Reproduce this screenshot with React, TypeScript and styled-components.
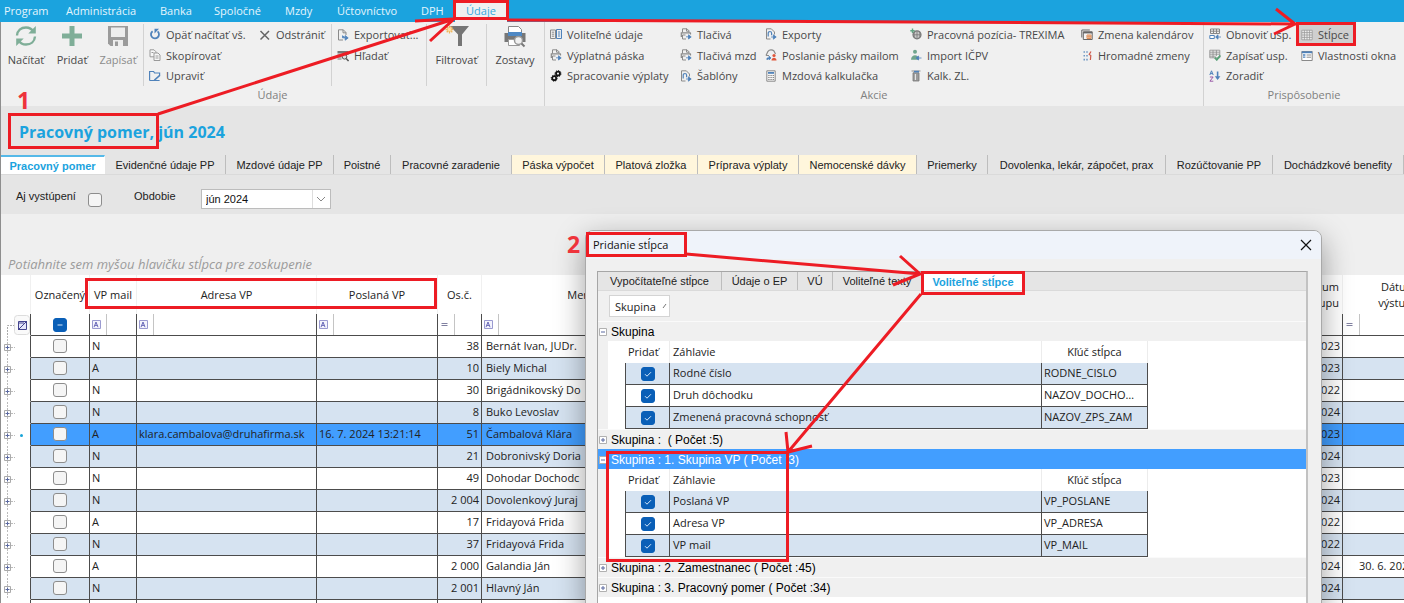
import React from "react";
import styled, { createGlobalStyle, css } from "styled-components";

const ui = `"Open Sans", "Noto Sans", sans-serif`;
const arial = `"Liberation Sans", Arial, sans-serif`;
const blue = "#1ba3de";
const line = "#4c4c4c";
const stripe = "#d6e3f1";
const selected = "#429eff";

const Global = createGlobalStyle`
  *, *::before, *::after { box-sizing: border-box; }
  body { margin: 0; background: #efefef; font-family: ${ui}; font-size: 11px; color: #222; }
  button { border: 0; padding: 0; margin: 0; background: none; font: inherit; color: inherit; white-space: nowrap; }
`;

/* ---------- shell ---------- */
const Shell = styled.div`
  position: relative;
  height: 100vh;
  overflow: hidden;
  display: flex;
  flex-direction: column;
`;
const MenuBar = styled.nav`
  display: flex;
  flex: none;
  height: 22px;
  padding-left: 4px;
  background: ${blue};
`;
const MenuItem = styled.button<{ $w: number; $active?: boolean }>`
  width: ${(p) => p.$w}px;
  height: 22px;
  text-align: ${(p) => (p.$active ? "center" : "left")};
  color: ${(p) => (p.$active ? "#35a9de" : "#e4f5fd")};
  background: ${(p) => (p.$active ? "#f0f0f0" : "transparent")};
  line-height: 20px;
`;
const Body = styled.div`
  flex: 1;
  display: flex;
  flex-direction: column;
  border-left: 1px solid #8e8e8e;
  min-height: 0;
`;

/* ---------- ribbon ---------- */
const Ribbon = styled.div`
  display: flex;
  flex: none;
  height: 84px;
  background: #f0f0f0;
  color: #484848;
`;
const Group = styled.section<{ $w?: number }>`
  flex: ${(p) => (p.$w ? `0 0 ${p.$w}px` : "1 1 0")};
  min-width: 0;
  display: flex;
  flex-direction: column;
  & + & { border-left: 1px solid #d2d2d2; }
`;
const GroupContent = styled.div`
  display: flex;
  height: 64px;
  padding-top: 2px;
`;
const GroupLabel = styled.div`
  text-align: center;
  line-height: 18px;
  color: #808080;
`;
const Section = styled.div<{ $w: number; $split?: boolean }>`
  flex: 0 0 ${(p) => p.$w}px;
  min-width: 0;
  display: flex;
  border-right: 1px solid ${(p) => (p.$split ? "#d2d2d2" : "transparent")};
`;
const BigButton = styled.button<{ $w: number; $dim?: boolean }>`
  width: ${(p) => p.$w}px;
  display: flex;
  flex-direction: column;
  align-items: center;
  gap: 4px;
  color: ${(p) => (p.$dim ? "#8c8c8c" : "#484848")};
  svg { width: 24px; height: 24px; }
`;
const Column = styled.div<{ $w: number }>`
  flex: 0 0 ${(p) => p.$w}px;
  min-width: 0;
  display: flex;
  flex-direction: column;
  align-items: flex-start;
`;
const SmallButton = styled.button<{ $on?: boolean }>`
  display: flex;
  align-items: center;
  gap: 5px;
  height: 21px;
  min-width: 57px;
  padding: 0 5px;
  background: ${(p) => (p.$on ? "#cfcfcf" : "transparent")};
  svg { width: 12px; height: 12px; flex: none; }
`;

/* ---------- heading, tabs, filter ---------- */
const Heading = styled.h1`
  flex: none;
  margin: 0;
  height: 49px;
  padding: 4px 0 0 18px;
  font-size: 16px;
  line-height: 44px;
  font-weight: 700;
  color: ${blue};
  background: #e5e5e5;
`;
const TabStrip = styled.div`
  display: flex;
  flex: none;
  height: 20px;
  background: #e5e5e5;
  border-bottom: 1px solid #dadada;
  font-family: ${arial};
  font-size: 11px;
`;
const Tab = styled.button<{ $w: number; $tone?: "active" | "cream" }>`
  flex: 0 0 ${(p) => p.$w}px;
  line-height: 18px;
  color: #222;
  border-right: 1px solid #bdbdbd;
  ${(p) => p.$tone === "cream" && css`background: #fff6dc;`}
  ${(p) =>
    p.$tone === "active" &&
    css`
      background: #fff;
      color: ${blue};
      font-weight: 700;
      line-height: 16px;
      border-top: 2px solid #55b9e8;
      border-right-color: transparent;
    `}
`;
const FilterBar = styled.div`
  display: flex;
  flex: none;
  align-items: flex-start;
  height: 39px;
  padding: 14px 0 0 15px;
  background: #e5e5e5;
  font-family: ${arial};
  font-size: 11px;
  color: #222;
  label { line-height: 15px; }
`;
const FilterLabel = styled.label<{ $w: number }>`
  width: ${(p) => p.$w}px;
`;
const Tick = styled.input.attrs({ type: "checkbox" })<{ $solid?: boolean }>`
  appearance: none;
  display: block;
  width: 14px;
  height: 14px;
  margin: 0;
  border: 1px solid #8d8d8d;
  border-radius: 3px;
  background: #f5f5f5;
  ${(p) =>
    p.$solid &&
    css`
      border-color: #0a5fb7;
      background-color: #0a5fb7;
    `}
`;
const TickWrap = styled.span`
  position: relative;
  display: block;
  width: 14px;
  margin: 0 auto;
  svg { position: absolute; inset: 0; width: 14px; height: 14px; pointer-events: none; }
`;
const FilterTick = styled.div`
  padding-top: 4px;
  width: 46px;
`;
const SelectBox = styled.div`
  display: flex;
  position: relative;
  width: 130px;
  height: 20px;
  svg { position: absolute; right: 5px; top: 6px; width: 10px; height: 8px; pointer-events: none; }
  &::after { content: ""; position: absolute; right: 18px; top: 1px; bottom: 1px; width: 1px; background: #ddd; }
`;
const Select = styled.select`
  appearance: none;
  width: 100%;
  border: 1px solid #bcbcbc;
  border-radius: 0;
  background: #fff;
  padding: 0 4px;
  font: 11px ${arial};
  color: #111;
`;
const Hint = styled.div`
  flex: none;
  height: 61px;
  padding: 40px 0 0 7px;
  font-style: italic;
  font-size: 13px;
  line-height: 20px;
  color: #9b9b9b;
`;

/* ---------- main grid ---------- */
const GridArea = styled.div`
  flex: 1;
  min-height: 0;
  overflow: hidden;
  background: #fff;
`;
const Grid = styled.table`
  width: calc(100% + 51px);
  table-layout: fixed;
  border-collapse: separate;
  border-spacing: 0;
  line-height: 16px;
  th { height: 39px; padding: 0; font-weight: 400; vertical-align: middle; border-right: 1px solid #f0f0f0; }
  td {
    height: 22px;
    padding: 0 2px;
    overflow: hidden;
    white-space: nowrap;
    border-bottom: 1px solid ${line};
    border-right: 1px solid ${line};
    vertical-align: middle;
  }
  td:first-child { border-bottom-color: transparent; background: #fff; padding: 0; }
`;
const Row = styled.tr<{ $bg: string }>`
  td { background: ${(p) => p.$bg}; padding-bottom: 2px; }
  td:first-child { padding-bottom: 0; }
`;
const Num = styled.td`
  text-align: right;
`;
const Name = styled.td`
  && { padding-left: 4px; }
`;
const EndDate = styled.td`
  && { padding-left: 16px; }
`;
const StartHead = styled.th`
  && { padding-right: 3px; text-align: right; }
`;
const FilterCell = styled.div`
  display: flex;
  align-items: center;
  width: 15px;
  height: 21px;
  border-right: 1px solid #c4c4c4;
  svg { width: 9px; height: 9px; }
`;
const Gutter = styled.div`
  height: 21px;
  svg { display: block; width: 29px; height: 21px; }
`;

/* ---------- dialog ---------- */
const Dialog = styled.section`
  position: absolute;
  top: 230px;
  right: 82px;
  bottom: -8px;
  left: 585px;
  display: flex;
  flex-direction: column;
  background: #f0f0f0;
  border: 1px solid #a9a9a9;
  border-radius: 8px;
  box-shadow: 0 10px 30px rgba(0, 0, 0, 0.38);
  overflow: hidden;
`;
const DialogBar = styled.header`
  flex: none;
  display: flex;
  justify-content: space-between;
  align-items: center;
  height: 28px;
  padding: 0 9px 0 7px;
  background: #eff3fa;
  color: #111;
  h2 { margin: 0; font-size: 11px; font-weight: 400; line-height: 20px; }
  svg { display: block; width: 12px; height: 12px; }
`;
const Panel = styled.div`
  flex: 1;
  margin: 12px 13px 0 11px;
  border: 1px solid #a6a6a6;
  border-right: 2px solid #c2c2c2;
  border-bottom: 0;
  background: #fff;
`;
const PanelTabs = styled(TabStrip)`
  height: 19px;
`;
const SortBar = styled.div`
  height: 30px;
  padding: 4px 0 0 11px;
  background: #f0f0f0;
`;
const SortChip = styled.button`
  display: flex;
  align-items: center;
  gap: 6px;
  height: 22px;
  width: 61px;
  padding: 0 5px;
  border: 1px solid #d4d4d4;
  background: #fff;
  svg { flex: none; width: 5px; height: 6px; }
`;
const GroupRow = styled.button<{ $on?: boolean }>`
  display: flex;
  align-items: center;
  gap: 4px;
  width: 100%;
  height: 20px;
  padding: 0 0 0 1px;
  border-top: 1px solid ${(p) => (p.$on ? selected : "#fafafa")};
  background: ${(p) => (p.$on ? selected : "#f0f0f0")};
  color: ${(p) => (p.$on ? "#fff" : "#000")};
  font-family: ${arial};
  font-size: 12px;
  svg { width: 8px; height: 8px; }
`;
const SubIndent = styled.div`
  padding-left: 10px;
  background: #f0f0f0;
`;
const SubWrap = styled.div`
  padding-left: 17px;
  background: #fff;
`;
const SubTable = styled.table`
  width: 523px;
  table-layout: fixed;
  border-collapse: separate;
  border-spacing: 0;
  line-height: 16px;
  th { height: 22px; padding: 0 3px; font-weight: 400; text-align: left; border-right: 1px solid #ececec; }
  th:last-child { text-align: center; }
  td {
    height: 22px;
    padding: 0 2px 1px 3px;
    white-space: nowrap;
    overflow: hidden;
    text-overflow: ellipsis;
    border-bottom: 1px solid ${line};
    border-right: 1px solid ${line};
  }
  td:last-child { padding-left: 2px; padding-right: 9px; }
  td:first-child { border-left: 1px solid ${line}; padding-bottom: 0; }
  tr:nth-child(odd) td { background: ${stripe}; }
`;

/* ---------- annotations ---------- */
const Marks = styled.svg`
  position: absolute;
  top: 0;
  left: 0;
  width: 1404px;
  height: 603px;
  pointer-events: none;
  fill: none;
  stroke: #ed1c24;
  stroke-width: 3;
  text { stroke: none; fill: #ee333b; font: 700 23px ${ui}; }
`;

/* ---------- icons ---------- */
const G = "#8a8a8a";
const B = "#4f82ba";
const icons: Record<string, React.ReactNode> = {
  undo: <><path d="M3.600 3.200A4 4 0 1 0 8.600 3.400" fill="none" stroke={B} strokeWidth="1.800" /><path d="M5.500 5.500V.8H10z" fill={B} /></>,
  copy: <g fill="#f7f7f7" stroke="#9a9a9a"><path d="M1 .8h4l2 2v5H1z" /><path d="M5 4h4l2 2v5.500H5z" /><path d="M6.500 7h3M6.500 9h3M2.500 3.500h2" /></g>,
  edit: <><path d="M.6 10.500V1.500h4l1 1.500h5v2M.6 10.500h10" fill="none" stroke={B} strokeWidth="1.200" /><path d="M5 9.500l5.500-5 1 1.200L6.200 10.600 4.600 11z" fill={B} /></>,
  cross: <path d="M1.500 2l8.500 8.500M10 2l-8.500 8.500" stroke="#666" strokeWidth="1.500" />,
  export: <><path d="M6 11H1.500V.8h4.800L9 3.500V6M6 .8v3h3" fill="none" stroke={G} /><path d="M5.500 6.500v2.300h4M8.200 6.600l3 2.300-3 2.300z" fill={B} stroke={B} strokeWidth=".8" /></>,
  search: <><path d="M.5 1h11v2.500H.5z" fill="#777" /><path d="M.5 5h5M.5 7h4M.5 9h4M9.500 4.500h2" stroke="#777" /><circle cx="7.500" cy="6.800" r="2.300" fill="#ddd" stroke="#555" /><path d="M9.200 8.500l2.300 2.600" stroke="#555" strokeWidth="1.400" /></>,
  book: <><path d="M.5 2h5v8.500h-5z" fill="none" stroke={G} /><path d="M6.500 1.500h5v9h-5z" fill="none" stroke={B} /><path d="M1.800 4.200h2.400M1.800 6.200h2.400M1.800 8.200h2.400" stroke={G} /><path d="M8 4h2.200M8 6h2.200M8 8h2.200" stroke={B} /></>,
  print: <><path d="M2.500 4.500V.8h4.500L9 2.800v1.700M6.500 .8v2.400H9" fill="none" stroke={G} /><path d="M.8 4.800h10M1.300 4.800v3.500H3M10.500 4.800v1.700" fill="none" stroke={G} strokeWidth="1.200" /><path d="M2.500 7v4h3.500M2.500 7h3" fill="none" stroke={G} /><path d="M6 8.800h3M8.500 6.800l2.700 2.100-2.700 2.100z" fill={B} stroke={B} strokeWidth=".8" /></>,
  doc: <><path d="M5.500 11h-4V.8h4.800L9.500 4v2.500" fill="none" stroke={G} /><path d="M3.200 8.500V5.200a1.700 1.700 0 0 1 3.400 0v2" fill="none" stroke={B} strokeWidth="1.200" /><path d="M6 9h3M8.400 6.800l2.800 2.200-2.800 2.200z" fill={B} stroke={B} strokeWidth=".8" /></>,
  gears: <g fill="none" stroke="#111"><circle cx="8" cy="3.600" r="2" strokeWidth="1.800" /><circle cx="8" cy="3.600" r="3" strokeWidth="1" strokeDasharray="1.200 1.100" /><circle cx="4.200" cy="8.200" r="2" strokeWidth="1.800" /><circle cx="4.200" cy="8.200" r="3" strokeWidth="1" strokeDasharray="1.200 1.100" /></g>,
  mail: <><path d="M1 6.500L3 2.300A4 4 0 0 1 9 2l1.500 3M1 6.500h3" fill="none" stroke={G} strokeWidth="1.200" /><path d="M2 11V9h3M4 7.200L6 9l-2 1.800z" fill={B} stroke={B} strokeWidth=".8" /><circle cx="9" cy="6.500" r="1.600" fill="#e0563a" /><path d="M6.500 11.500c0-3.600 5-3.600 5 0z" fill="#e0563a" /></>,
  calc: <><path d="M1.800.8h8.400v10.400H1.800z" fill="#f4f4f4" stroke={G} /><path d="M3 2h6v1.800H3z" fill={B} /><path d="M3.200 5.500h5.800M3.200 7.500h5.800M3.200 9.500h5.800" stroke={G} strokeDasharray="1.400 .8" /></>,
  globe: <><circle cx="7" cy="6.800" r="4" fill="#c9c9c9" stroke="#777" strokeWidth="1.200" /><path d="M3 6.800h8M7 3v7.800M5 3.600c-1.200 2-1.200 4.400 0 6.400M9 3.600c1.200 2 1.200 4.400 0 6.400" fill="none" stroke="#777" strokeWidth=".8" /><path d="M.3 2.800h4.400M2.500.6V5" stroke="#62a583" strokeWidth="1.400" /></>,
  person: <><circle cx="5" cy="2.800" r="2" fill="#6fa58d" /><path d="M1 10.800c0-6 8-6 8 0z" fill="#6fa58d" /><path d="M7.500 9h4M8.600 7L6 9l2.600 2z" fill={B} stroke={B} strokeWidth=".8" /></>,
  bin: <><path d="M1.500 1h9M3 11V2.800h6V11z" fill="#9b9b9b" stroke="#777" strokeWidth=".8" /><path d="M4 .8h5v1.600H4z" fill={B} /><path d="M5.400 4v6" stroke="#eee" /></>,
  calendar: <><path d="M.8 8.500V1h8M2.300 10.500V2.800h8.900v7.700z" fill="#f4f4f4" stroke="#666" /><path d="M2.300 3.600h8.900" stroke="#666" strokeWidth="1.600" /><path d="M6 6h4v3.500H6zM8 6v3.500M6 7.800h4" fill="none" stroke="#e08d55" /></>,
  lines: <><path d="M3.200 1.200v1.600M3.200 5v1.600M3.200 8.800v1.600M6 1.200v1.600M6 5v1.600M6 8.800v1.600" stroke={B} strokeWidth="1.200" /><path d="M10 1.500L8.200 4.400l1.600 1.200-.4 4.400" fill="none" stroke="#cd5a4a" strokeWidth="1.200" /></>,
  restore: <><path d="M1.500 1h9v4.500h-9zM1.500 3.200h9M4.500 1v4.500M7.500 1v4.500" fill="none" stroke="#888" /><path d="M.8 7.500h4.500v3H.8z" fill="#fff" stroke={B} /><path d="M7.500 9H12M9 6.800L6.600 9 9 11.200z" fill={B} stroke={B} strokeWidth=".8" /></>,
  save: <><path d="M.8 1.200h10v7.600H.8zM.8 3.200h10M.8 5.200h10M.8 7.200h6M4 1.200v7.600M7.400 1.200V7" fill="none" stroke="#8a8a8a" strokeWidth=".8" /><path d="M5.800 8.600l2 2.200 3.600-4.400" fill="none" stroke="#58a076" strokeWidth="1.800" /></>,
  sort: <><path d="M.8 5L2.500.8 4.200 5M1.400 3.600h2.200" fill="none" stroke={B} /><path d="M.9 7h3.200L.9 11.200h3.400" fill="none" stroke="#9a5aa8" /><path d="M8.600 1.500v7" stroke={B} strokeWidth="1.600" /><path d="M5.800 6.200L8.600 10l2.800-3.800z" fill={B} /></>,
  columns: <path d="M.8 1.200h10.400v9.600H.8zM.8 3.600h10.400M.8 6h10.400M.8 8.400h10.400M3.400 1.200v9.600M6 1.200v9.600M8.600 1.200v9.600" fill="#eee" stroke="#999" strokeWidth=".8" />,
  window: <><path d="M.8 1.500h10.400v9H.8z" fill="#fff" stroke={G} /><path d="M.8 2.300h10.400" stroke={B} strokeWidth="1.800" /><path d="M2 5h2.400M2 7.200h2.400" stroke={B} strokeWidth="1.300" /><path d="M5.600 5h4.400M5.600 7.200h4.400" stroke={G} /></>,
};
const Ico = ({ n }: { n: string }) => <svg viewBox="0 0 12 12" aria-hidden>{icons[n]}</svg>;
const Item = ({ n, children, on }: { n: string; children: string; on?: boolean }) => (
  <SmallButton $on={on}><Ico n={n} />{children}</SmallButton>
);

const TextFilter = () => (
  <svg viewBox="0 0 9 9" aria-hidden><path d="M.5.5h8v8h-8z" fill="#f4f4fd" stroke="#9a9ad0" /><path d="M2 7.200L4 2l2 5.200M2.800 5.400h2.600" fill="none" stroke="#5a5ab0" strokeWidth=".9" /></svg>
);
const EqFilter = () => (
  <svg viewBox="0 0 9 9" aria-hidden><path d="M1.500 3.500h6M1.500 5.500h6" stroke="#8080a0" /></svg>
);
const Expander = ({ open }: { open?: boolean }) => (
  <svg viewBox="0 0 8 8" aria-hidden><path d="M.5.5h7v7h-7z" fill="#fff" stroke="#b0b0b0" /><path d={open ? "M2 4h4" : "M2 4h4M4 2v4"} stroke="#5a68a0" /></svg>
);
const BlueTick = ({ label, dash }: { label: string; dash?: boolean }) => (
  <TickWrap>
    <Tick $solid defaultChecked aria-label={label} />
    <svg viewBox="0 0 14 14" aria-hidden><path d={dash ? "M4.500 7h5" : "M4 7.200l2 2 4-4"} fill="none" stroke="#d6e8fa" /></svg>
  </TickWrap>
);

/* ---------- data ---------- */
const tabs: [string, number, ("active" | "cream")?][] = [
  ["Pracovný pomer", 104, "active"], ["Evidenčné údaje PP", 121], ["Mzdové údaje PP", 108], ["Poistné", 57],
  ["Pracovné zaradenie", 121], ["Páska výpočet", 93, "cream"], ["Platová zložka", 93, "cream"],
  ["Príprava výplaty", 101, "cream"], ["Nemocenské dávky", 118, "cream"], ["Priemerky", 71],
  ["Dovolenka, lekár, zápočet, prax", 178], ["Rozúčtovanie PP", 107], ["Dochádzkové benefity", 131],
];
type Person = [string, string, string, string, string, string, string];
const people: Person[] = [
  ["N", "", "", "38", "Bernát Ivan, JUDr.", "2023", ""],
  ["A", "", "", "10", "Biely Michal", "2023", ""],
  ["N", "", "", "30", "Brigádnikovský Do", "2022", ""],
  ["N", "", "", "8", "Buko Levoslav", "2024", ""],
  ["A", "klara.cambalova@druhafirma.sk", "16. 7. 2024 13:21:14", "51", "Čambalová Klára", "2023", ""],
  ["N", "", "", "21", "Dobronivský Doria", "2024", ""],
  ["N", "", "", "49", "Dohodar Dochodc", "2023", ""],
  ["N", "", "", "2 004", "Dovolenkový Juraj", "2024", ""],
  ["A", "", "", "17", "Fridayová Frida", "2022", ""],
  ["N", "", "", "37", "Fridayová Frida", "2022", ""],
  ["A", "", "", "2 000", "Galandia Ján", "2024", "30. 6. 2024"],
  ["N", "", "", "2 001", "Hlavný Ján", "2024", ""],
];

const SubGrid = ({ rows }: { rows: [string, string][] }) => (
  <SubIndent><SubWrap>
    <SubTable>
      <colgroup><col style={{ width: 45 }} /><col style={{ width: 372 }} /><col /></colgroup>
      <thead><tr><th>Pridať</th><th>Záhlavie</th><th>Kľúč stĺpca</th></tr></thead>
      <tbody>
        {rows.map(([a, b]) => (
          <tr key={b}><td><BlueTick label={a} /></td><td>{a}</td><td>{b}</td></tr>
        ))}
      </tbody>
    </SubTable>
  </SubWrap></SubIndent>
);

export default function App() {
  return (
    <Shell>
      <Global />
      <MenuBar>
        <MenuItem $w={62}>Program</MenuItem>
        <MenuItem $w={94}>Administrácia</MenuItem>
        <MenuItem $w={54}>Banka</MenuItem>
        <MenuItem $w={71}>Spoločné</MenuItem>
        <MenuItem $w={52}>Mzdy</MenuItem>
        <MenuItem $w={84}>Účtovníctvo</MenuItem>
        <MenuItem $w={34}>DPH</MenuItem>
        <MenuItem $w={52} $active>Údaje</MenuItem>
      </MenuBar>
      <Body>
        <Ribbon>
          <Group $w={543}>
            <GroupContent>
              <Section $w={143} $split>
                <BigButton $w={50}>
                  <svg viewBox="0 0 24 24" aria-hidden><g fill="none" stroke="#7fae98" strokeWidth="2.400"><path d="M3 11.500C3.400 6.500 7 3.500 12 3.500c3.400 0 6 1.600 7.600 4.200" /><path d="M21 12.500C20.600 17.500 17 20.500 12 20.500c-3.400 0-6-1.600-7.600-4.200" /></g><path d="M21.800 2v7.500h-7.500zM2.200 22v-7.500h7.500z" fill="#7fae98" /></svg>
                  Načítať
                </BigButton>
                <BigButton $w={42}>
                  <svg viewBox="0 0 24 24" aria-hidden><path d="M9.500 2h5v7.500H22v5h-7.500V22h-5v-7.500H2v-5h7.500z" fill="#7fae98" /></svg>
                  Pridať
                </BigButton>
                <BigButton $w={50} $dim>
                  <svg viewBox="0 0 24 24" aria-hidden><path d="M2 2h20v20H4.500L2 19.500z" fill="#9b9b9b" /><path d="M5 3.500h14V13H5z" fill="#ededed" /><path d="M7 16h10v6H7z" fill="#ededed" /><path d="M9 17.500h3V22H9z" fill="#9b9b9b" /></svg>
                  Zapísať
                </BigButton>
              </Section>
              <Section $w={188} $split>
                <Column $w={110}>
                  <Item n="undo">Opäť načítať vš.</Item>
                  <Item n="copy">Skopírovať</Item>
                  <Item n="edit">Upraviť</Item>
                </Column>
                <Column $w={70}><Item n="cross">Odstrániť</Item></Column>
              </Section>
              <Section $w={95} $split>
                <Column $w={94}>
                  <Item n="export">Exportovať...</Item>
                  <Item n="search">Hľadať</Item>
                </Column>
              </Section>
              <Section $w={60} $split>
                <BigButton $w={60}>
                  <svg viewBox="0 0 24 24" aria-hidden><path d="M5 2h19l-7 8.500V22h-4V10.500z" fill="#757575" /><g stroke="#f0b65c" strokeWidth="1.300"><path d="M4.500 1.500v8M.5 5.500h8M1.700 2.700l5.600 5.600M7.300 2.700L1.700 8.300" /></g><circle cx="4.500" cy="5.500" r="1.700" fill="#fbe0a8" /></svg>
                  Filtrovať
                </BigButton>
              </Section>
              <Section $w={57}>
                <BigButton $w={57}>
                  <svg viewBox="0 0 24 24" aria-hidden><path d="M5.500 2.500h10l3 3V9h-13z" fill="#fff" stroke="#888" /><path d="M1.500 9h21v9h-21z" fill="#777" /><path d="M5 8h14v4H5z" fill="#4e88c4" /><path d="M5.500 15.500h11v6h-11z" fill="#fff" stroke="#999" /><circle cx="15.500" cy="16.500" r="4" fill="#f1f1f1" stroke="#999" strokeWidth="1.500" /><path d="M18.500 19.500l3 3" stroke="#777" strokeWidth="2" /></svg>
                  Zostavy
                </BigButton>
              </Section>
            </GroupContent>
            <GroupLabel>Údaje</GroupLabel>
          </Group>
          <Group $w={659}>
            <GroupContent>
              <Column $w={130}>
                <Item n="book">Voliteľné údaje</Item>
                <Item n="print">Výplatná páska</Item>
                <Item n="gears">Spracovanie výplaty</Item>
              </Column>
              <Column $w={85}>
                <Item n="print">Tlačivá</Item>
                <Item n="print">Tlačivá mzd</Item>
                <Item n="doc">Šablóny</Item>
              </Column>
              <Column $w={145}>
                <Item n="doc">Exporty</Item>
                <Item n="mail">Poslanie pásky mailom</Item>
                <Item n="calc">Mzdová kalkulačka</Item>
              </Column>
              <Column $w={171}>
                <Item n="globe">Pracovná pozícia- TREXIMA</Item>
                <Item n="person">Import IČPV</Item>
                <Item n="bin">Kalk. ZL.</Item>
              </Column>
              <Column $w={123}>
                <Item n="calendar">Zmena kalendárov</Item>
                <Item n="lines">Hromadné zmeny</Item>
              </Column>
            </GroupContent>
            <GroupLabel>Akcie</GroupLabel>
          </Group>
          <Group>
            <GroupContent>
              <Column $w={92}>
                <Item n="restore">Obnoviť usp.</Item>
                <Item n="save">Zapísať usp.</Item>
                <Item n="sort">Zoradiť</Item>
              </Column>
              <Column $w={108}>
                <Item n="columns" on>Stĺpce</Item>
                <Item n="window">Vlastnosti okna</Item>
              </Column>
            </GroupContent>
            <GroupLabel>Prispôsobenie</GroupLabel>
          </Group>
        </Ribbon>

        <Heading>Pracovný pomer, jún 2024</Heading>
        <TabStrip>
          {tabs.map(([t, w, tone]) => <Tab key={t} $w={w} $tone={tone}>{t}</Tab>)}
        </TabStrip>
        <FilterBar>
          <FilterLabel $w={72} htmlFor="left">Aj vystúpení</FilterLabel>
          <FilterTick><Tick id="left" /></FilterTick>
          <FilterLabel $w={67} htmlFor="period">Obdobie</FilterLabel>
          <SelectBox>
            <Select id="period"><option>jún 2024</option></Select>
            <svg viewBox="0 0 10 8" aria-hidden><path d="M1 2l4 4 4-4" fill="none" stroke="#888" /></svg>
          </SelectBox>
        </FilterBar>
        <Hint>Potiahnite sem myšou hlavičku stĺpca pre zoskupenie</Hint>

        <GridArea>
          <Grid>
            <colgroup>
              {[30, 59, 47, 180, 121, 44, 201].map((w, i) => <col key={i} style={{ width: w }} />)}
              <col />
              <col style={{ width: 70 }} /><col style={{ width: 112 }} />
            </colgroup>
            <thead>
              <tr>
                <th /><th>Označený</th><th>VP mail</th><th>Adresa VP</th><th>Poslaná VP</th><th>Os.č.</th><th>Meno</th><th />
                <StartHead>Dátum<br />nástupu</StartHead><th>Dátum<br />výstupu</th>
              </tr>
            </thead>
            <tbody>
              <tr>
                <td><Gutter><svg viewBox="0 0 29 21" aria-hidden><path d="M6.500 21V11.500H14" fill="none" stroke="#aaa" strokeDasharray="2 1" /><rect x="13.500" y="1.500" width="15" height="19" rx="3" fill="#fafafa" stroke="#ddd" /><path d="M17.500 7.500h8v8h-8zM17 16l9-9M18 9h5" fill="#e4e6fa" stroke="#44448e" /></svg></Gutter></td>
                <td><BlueTick dash label="Označiť všetky" /></td>
                <td><FilterCell><TextFilter /></FilterCell></td>
                <td><FilterCell><TextFilter /></FilterCell></td>
                <td><FilterCell><TextFilter /></FilterCell></td>
                <td><FilterCell><EqFilter /></FilterCell></td>
                <td><FilterCell><TextFilter /></FilterCell></td>
                <td /><td />
                <td><FilterCell><EqFilter /></FilterCell></td>
              </tr>
              {people.map(([vp, mail, sent, num, name, start, end], i) => (
                <Row key={num} $bg={i === 4 ? selected : i % 2 ? stripe : "#fff"}>
                  <td>
                    <Gutter><svg viewBox="0 0 29 21" aria-hidden>
                      <path d="M6.500 0v21M10 11.500h4" fill="none" stroke="#bbb" strokeDasharray="2 1" />
                      <path d="M3.500 8.500h6v6h-6z" fill="#fff" stroke="#aaa" /><path d="M4.500 11.500h4M6.500 9.500v4" stroke="#5a68a0" />
                      {i === 4 && <circle cx="20.500" cy="11.500" r="1.500" fill="#18a4d8" />}
                    </svg></Gutter>
                  </td>
                  <td><TickWrap><Tick aria-label={name} /></TickWrap></td>
                  <td>{vp}</td><td>{mail}</td><td>{sent}</td>
                  <Num>{num}</Num><Name>{name}</Name><td />
                  <Num>{start}</Num><EndDate>{end}</EndDate>
                </Row>
              ))}
              <Row $bg="#fff">{people[0].concat("", "", "").map((_, i) => <td key={i} />)}</Row>
            </tbody>
          </Grid>
        </GridArea>
      </Body>

      <Dialog role="dialog" aria-label="Pridanie stĺpca">
        <DialogBar>
          <h2>Pridanie stĺpca</h2>
          <button aria-label="Zavrieť"><svg viewBox="0 0 12 12"><path d="M1 1l10 10M11 1L1 11" stroke="#111" strokeWidth="1.200" /></svg></button>
        </DialogBar>
        <Panel>
          <PanelTabs>
            <Tab $w={124}>Vypočítateľné stĺpce</Tab>
            <Tab $w={76}>Údaje o EP</Tab>
            <Tab $w={35}>VÚ</Tab>
            <Tab $w={89}>Voliteľné texty</Tab>
            <Tab $w={103} $tone="active">Voliteľné stĺpce</Tab>
          </PanelTabs>
          <SortBar>
            <SortChip>Skupina<svg viewBox="0 0 5 6" aria-hidden><path d="M1 5l3-4" stroke="#777" /></svg></SortChip>
          </SortBar>
          <GroupRow><Expander open />Skupina</GroupRow>
          <SubGrid rows={[["Rodné číslo", "RODNE_CISLO"], ["Druh dôchodku", "NAZOV_DOCHODKU"], ["Zmenená pracovná schopnosť", "NAZOV_ZPS_ZAM"]]} />
          <GroupRow><Expander />Skupina :&nbsp; ( Počet :5)</GroupRow>
          <GroupRow $on><Expander open />Skupina : 1. Skupina VP ( Počet :3)</GroupRow>
          <SubGrid rows={[["Poslaná VP", "VP_POSLANE"], ["Adresa VP", "VP_ADRESA"], ["VP mail", "VP_MAIL"]]} />
          <GroupRow><Expander />Skupina : 2. Zamestnanec ( Počet :45)</GroupRow>
          <GroupRow><Expander />Skupina : 3. Pracovný pomer ( Počet :34)</GroupRow>
        </Panel>
      </Dialog>

      <Marks viewBox="0 0 1404 603">
        <rect x="9.500" y="114.500" width="148" height="33" />
        <rect x="454.500" y="1.500" width="53" height="17" />
        <rect x="1297.500" y="23.500" width="57" height="21" />
        <rect x="86.500" y="279.500" width="349" height="28" />
        <rect x="587.500" y="233.500" width="98" height="22" />
        <rect x="922.500" y="272.500" width="101" height="21" />
        <rect x="607.500" y="452.500" width="180" height="108" />
        <path d="M158 114L454 19M415 21l39-2-24 22" />
        <path d="M507 20l789 4M1276 9l19 15-21 10" />
        <path d="M686 254l235 20M900 256l20 18-27 11" />
        <path d="M921 294L788 452M786 432l2 20 24-6" />
        <text x="17" y="109">1</text>
        <text x="567" y="253">2</text>
      </Marks>
    </Shell>
  );
}
